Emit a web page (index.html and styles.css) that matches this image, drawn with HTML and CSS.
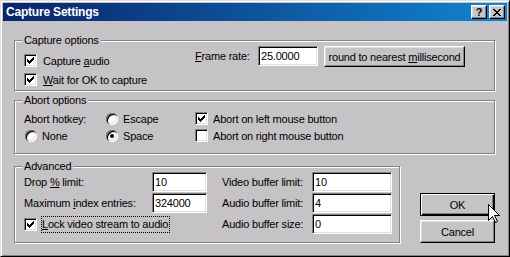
FILE: index.html
```html
<!DOCTYPE html>
<html lang="en">
<head>
  <meta charset="UTF-8">
  <title>Capture Settings</title>
  <link rel="stylesheet" href="styles.css">
</head>
<body>
  <div class="window">
    <!-- Title bar -->
    <div class="titlebar">
      <span class="title">Capture Settings</span>
      <div class="caption-buttons">
        <button class="caption-btn">?</button>
        <button class="caption-btn">
          <svg width="8" height="7" viewBox="0 0 8 7" shape-rendering="crispEdges">
            <path d="M0 0h2v1H0zM6 0h2v1H6zM1 1h2v1H1zM5 1h2v1H5zM2 2h4v1H2zM3 3h2v1H3zM2 4h4v1H2zM1 5h2v1H1zM5 5h2v1H5zM0 6h2v1H0zM6 6h2v1H6z" fill="#000"/>
          </svg>
        </button>
      </div>
    </div>

    <div class="dialog-body">
      <!-- Capture options -->
      <fieldset class="group group-capture">
        <legend>Capture options</legend>
        <div class="capture-layout">
          <div class="check-list">
            <label class="check-row">
              <span class="check"><svg width="11" height="11" viewBox="0 0 11 11" shape-rendering="crispEdges"><path d="M8 2h1v1H8zM7 3h2v1H7zM2 4h1v1H2zM6 4h3v1H6zM2 5h2v1H2zM5 5h3v1H5zM2 6h5v1H2zM3 7h3v1H3zM4 8h1v1H4z"/></svg></span>
              <span>Capture <u>a</u>udio</span>
            </label>
            <label class="check-row">
              <span class="check"><svg width="11" height="11" viewBox="0 0 11 11" shape-rendering="crispEdges"><path d="M8 2h1v1H8zM7 3h2v1H7zM2 4h1v1H2zM6 4h3v1H6zM2 5h2v1H2zM5 5h3v1H5zM2 6h5v1H2zM3 7h3v1H3zM4 8h1v1H4z"/></svg></span>
              <span><u>W</u>ait for OK to capture</span>
            </label>
          </div>
          <div class="frame-rate">
            <span class="frame-label"><u>F</u>rame rate:</span>
            <input class="field field-rate" type="text" value="25.0000">
            <button class="btn btn-round">round to nearest <u>m</u>illisecond</button>
          </div>
        </div>
      </fieldset>

      <!-- Abort options -->
      <fieldset class="group group-abort">
        <legend>Abort options</legend>
        <div class="abort-grid">
          <span class="plain-label">Abort hotkey:</span>
          <label class="radio-row"><span class="radio"></span><span>Escape</span></label>
          <label class="check-row">
            <span class="check"><svg width="11" height="11" viewBox="0 0 11 11" shape-rendering="crispEdges"><path d="M8 2h1v1H8zM7 3h2v1H7zM2 4h1v1H2zM6 4h3v1H6zM2 5h2v1H2zM5 5h3v1H5zM2 6h5v1H2zM3 7h3v1H3zM4 8h1v1H4z"/></svg></span>
            <span>Abort on left mouse button</span>
          </label>
          <label class="radio-row radio-none"><span class="radio"></span><span>None</span></label>
          <label class="radio-row"><span class="radio checked"></span><span>Space</span></label>
          <label class="check-row">
            <span class="check"></span>
            <span>Abort on right mouse button</span>
          </label>
        </div>
      </fieldset>

      <div class="bottom-row">
        <!-- Advanced -->
        <fieldset class="group group-advanced">
          <legend>Advanced</legend>
          <div class="advanced-grid">
            <span class="plain-label">Drop <u>%</u> limit:</span>
            <input class="field field-small" type="text" value="10">
            <span class="plain-label">Video buffer limit:</span>
            <input class="field field-wide" type="text" value="10">

            <span class="plain-label">Maximum <u>i</u>ndex entries:</span>
            <input class="field field-small" type="text" value="324000">
            <span class="plain-label">Audio buffer limit:</span>
            <input class="field field-wide" type="text" value="4">

            <label class="check-row lock-row">
              <span class="check"><svg width="11" height="11" viewBox="0 0 11 11" shape-rendering="crispEdges"><path d="M8 2h1v1H8zM7 3h2v1H7zM2 4h1v1H2zM6 4h3v1H6zM2 5h2v1H2zM5 5h3v1H5zM2 6h5v1H2zM3 7h3v1H3zM4 8h1v1H4z"/></svg></span>
              <span class="focus-label"><u>L</u>ock video stream to audio</span>
            </label>
            <span class="plain-label">Audio buffer size:</span>
            <input class="field field-wide" type="text" value="0">
          </div>
        </fieldset>

        <div class="dialog-buttons">
          <button class="btn btn-default">OK</button>
          <button class="btn">Cancel</button>
        </div>
      </div>
    </div>

    <!-- mouse pointer resting on OK -->
    <svg class="cursor" width="13" height="20" viewBox="0 0 13 20">
      <path d="M0.5 0.5V16.5L4.5 12.5L7.5 18.5L9.5 17.5L6.5 11.5H11.5Z" fill="#fff" stroke="#000" stroke-width="1"/>
    </svg>
  </div>
</body>
</html>
```

FILE: styles.css
```css
/* Global */
body {
  margin: 0;
  background-color: #c6c3c6;
  font-family: "Liberation Sans", Arial, sans-serif;
  font-size: 11px;
  letter-spacing: -0.2px;
  color: #000;
}

/* Dialog window frame */
.window {
  position: relative;
  width: 510px;
  height: 257px;
  box-sizing: border-box;
  padding: 2px;
  background-color: #c6c3c6;
  border: 1px solid;
  border-color: #dfdfdf #000 #000 #dfdfdf;
  box-shadow: inset 1px 1px #fff, inset -1px -1px #848284;
}

/* Title bar */
.titlebar {
  display: flex;
  align-items: center;
  justify-content: space-between;
  height: 18px;
  padding: 0 2px 0 3px;
  background: linear-gradient(to right, #0a246a, #1084d0);
  color: #fff;
}

.title {
  font-weight: bold;
  font-size: 12px;
  letter-spacing: -0.2px;
}

.caption-buttons {
  display: flex;
  gap: 2px;
}

.caption-btn {
  display: flex;
  align-items: center;
  justify-content: center;
  width: 16px;
  height: 14px;
  padding: 0;
  box-sizing: border-box;
  background-color: #c6c3c6;
  border: 1px solid;
  border-color: #fff #000 #000 #fff;
  box-shadow: inset -1px -1px #848284, inset 1px 1px #dfdfdf;
  font-family: "Liberation Sans", Arial, sans-serif;
  font-weight: bold;
  font-size: 11px;
  line-height: 12px;
  color: #000;
}

/* Body */
.dialog-body {
  padding: 13px 12px 0 11px;
}

/* Etched group boxes */
.group {
  margin: 0;
  padding: 0 9px;
  min-width: 0;
  border: 1px solid #848284;
  box-shadow: inset 1px 1px #fff, 1px 1px #fff;
}

.group legend {
  margin-left: -2px;
  padding: 0 2px;
  line-height: 13px;
  background-color: #c6c3c6;
}

/* Checkboxes and radios */
.check-row {
  display: flex;
  align-items: center;
  gap: 6px;
  white-space: nowrap;
}

.check {
  flex: none;
  width: 13px;
  height: 13px;
  box-sizing: border-box;
  background-color: #fff;
  border: 1px solid;
  border-color: #848284 #fff #fff #848284;
  box-shadow: inset 1px 1px #000, inset -1px -1px #dfdfdf;
}

.check svg {
  display: block;
}

.radio-row {
  display: flex;
  align-items: center;
  gap: 5px;
}

.radio {
  position: relative;
  flex: none;
  width: 12px;
  height: 12px;
  border-radius: 50%;
  background-color: #fff;
  box-shadow: inset 1px 1px #848284, inset 2px 2px #000, inset -1px -1px #fff, inset -2px -2px #dfdfdf;
}

.radio.checked::after {
  content: "";
  position: absolute;
  left: 4px;
  top: 4px;
  width: 4px;
  height: 4px;
  border-radius: 50%;
  background-color: #000;
}

/* Text fields and push buttons */
.field {
  height: 20px;
  box-sizing: border-box;
  padding: 0 2px;
  margin: 0;
  background-color: #fff;
  border: 1px solid;
  border-color: #848284 #fff #fff #848284;
  box-shadow: inset 1px 1px #000, inset -1px -1px #dfdfdf;
  font-family: "Liberation Sans", Arial, sans-serif;
  font-size: 11px;
  letter-spacing: -0.2px;
  color: #000;
  outline: none;
}

.btn {
  width: 75px;
  height: 23px;
  padding: 0;
  margin: 0;
  background-color: #c6c3c6;
  border: 1px solid;
  border-color: #fff #000 #000 #fff;
  box-shadow: inset -1px -1px #848284, inset 1px 1px #dfdfdf;
  font-family: "Liberation Sans", Arial, sans-serif;
  font-size: 11px;
  letter-spacing: -0.2px;
  color: #000;
}

.btn-default {
  border-color: #000;
  box-shadow: inset 1px 1px #fff, inset -1px -1px #000, inset -2px -2px #848284;
}

/* Capture options */
.group-capture {
  padding-bottom: 1px;
}

.capture-layout {
  display: flex;
}

.check-list {
  width: 171px;
  padding-top: 4px;
}

.check-list .check-row {
  height: 19px;
}

.frame-rate {
  display: flex;
  align-items: flex-start;
  margin-top: -1px;
}

.frame-label {
  width: 63px;
  line-height: 20px;
}

.field-rate {
  width: 60px;
}

.btn-round {
  width: 141px;
  height: 21px;
  margin-left: 6px;
}

/* Abort options */
.group-abort {
  margin-top: 3px;
  padding-bottom: 9px;
}

.abort-grid {
  display: grid;
  grid-template-columns: 82px 89px auto;
  grid-auto-rows: 17px;
  align-items: center;
  padding-top: 3px;
}

.abort-grid .check-row {
  gap: 5px;
}

.radio-none {
  padding-left: 1px;
}

/* Advanced + dialog buttons */
.bottom-row {
  display: flex;
  margin-top: 6px;
}

.group-advanced {
  width: 388px;
  box-sizing: border-box;
  padding-bottom: 7px;
}

.advanced-grid {
  display: grid;
  grid-template-columns: 128px 70px 90px 80px;
  grid-auto-rows: 20px;
  row-gap: 1px;
  align-items: center;
  margin-top: -1px;
}

.plain-label {
  white-space: nowrap;
}

.field-small {
  width: 55px;
}

.field-wide {
  width: 80px;
}

.lock-row {
  grid-column: 1 / 3;
  gap: 4px;
}

.focus-label {
  padding: 1px 1px 1px 0;
  line-height: 13px;
  border: 1px dotted #000;
}

.dialog-buttons {
  display: flex;
  flex-direction: column;
  gap: 4px;
  margin-left: 20px;
  padding-top: 33px;
}

/* Mouse pointer */
.cursor {
  position: absolute;
  left: 487px;
  top: 203px;
}
```
